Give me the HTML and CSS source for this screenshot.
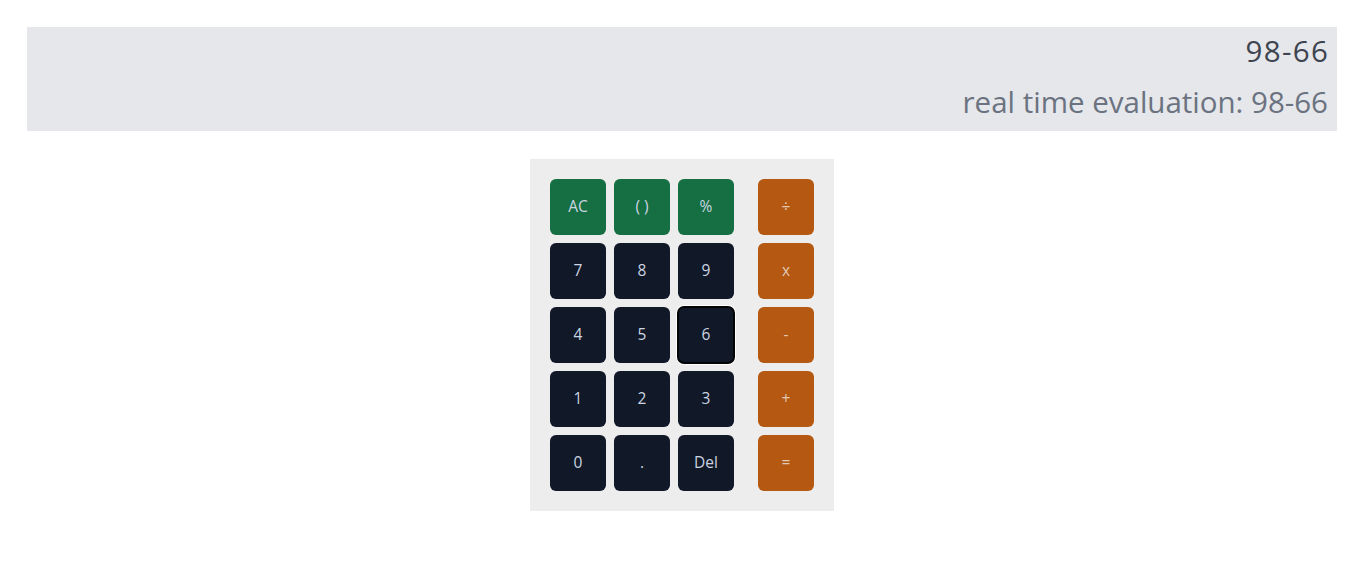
FILE: index.html
```html
<!DOCTYPE html>
<html lang="en">
<head>
<meta charset="utf-8">
<title>Calculator</title>
<link rel="stylesheet" href="styles.css">
</head>
<body>
<div class="display">
  <div class="expr">98-66</div>
  <div class="result">real time evaluation: 98-66</div>
</div>
<div class="calc">
  <div class="keys">
    <button class="key fn">AC</button>
    <button class="key fn">( )</button>
    <button class="key fn">%</button>
    <button class="key num">7</button>
    <button class="key num">8</button>
    <button class="key num">9</button>
    <button class="key num">4</button>
    <button class="key num">5</button>
    <button class="key num focused">6</button>
    <button class="key num">1</button>
    <button class="key num">2</button>
    <button class="key num">3</button>
    <button class="key num">0</button>
    <button class="key num">.</button>
    <button class="key num">Del</button>
  </div>
  <div class="ops">
    <button class="key op">÷</button>
    <button class="key op">x</button>
    <button class="key op">-</button>
    <button class="key op">+</button>
    <button class="key op">=</button>
  </div>
</div>
</body>
</html>
```

FILE: styles.css
```css
html, body {
  margin: 0;
  padding: 0;
  background: #ffffff;
  font-family: "Open Sans", "Noto Sans", sans-serif;
}

body {
  padding: 27px 28px 0 27px;
}

.display {
  background: #e5e7eb;
  padding: 4px 9px 9px 9px;
  display: flex;
  flex-direction: column;
  align-items: flex-end;
  gap: 11px;
  font-size: 29.5px;
  line-height: 40px;
}

.expr {
  color: #3d4450;
  letter-spacing: 1.4px;
  margin-right: -1.4px;
}

.result {
  color: #6b7280;
}

.calc {
  margin: 28px auto 0 auto;
  width: 304px;
  box-sizing: border-box;
  background: #ededed;
  padding: 20px;
  display: flex;
  gap: 24px;
}

.keys {
  display: grid;
  grid-template-columns: repeat(3, 56px);
  grid-auto-rows: 56px;
  gap: 8px;
}

.ops {
  display: grid;
  grid-template-columns: 56px;
  grid-auto-rows: 56px;
  gap: 8px;
}

.key {
  border: none;
  margin: 0;
  padding: 0 0 2px 0;
  width: 56px;
  height: 56px;
  border-radius: 6px;
  font-family: "Open Sans", "Noto Sans", sans-serif;
  font-size: 15.5px;
  line-height: 20px;
  color: #cbd5e1;
  display: flex;
  align-items: center;
  justify-content: center;
}

.fn {
  background: #166e43;
}

.num {
  background: #111827;
}

.op {
  background: #b45812;
  color: #e2c9b5;
}

.focused {
  outline: 2px solid #050505;
  outline-offset: -1px;
  box-shadow: 0 0 0 2px #ffffff;
}
```
